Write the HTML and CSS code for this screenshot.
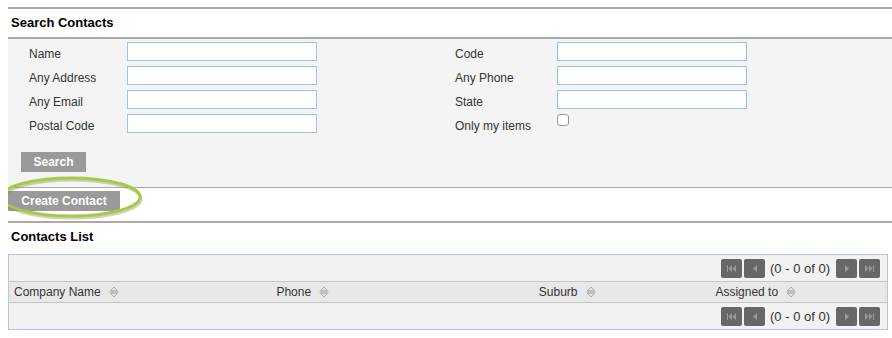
FILE: index.html
```html
<!DOCTYPE html>
<html lang="en">
<head>
    <meta charset="UTF-8">
    <title>Contacts</title>
    <link rel="stylesheet" href="styles.css">
</head>
<body>
    <div class="section-title">Search Contacts</div>
    <div class="search-panel">
        <div class="search-grid">
            <div class="search-col">
                <div class="field"><label>Name</label><input type="text"></div>
                <div class="field"><label>Any Address</label><input type="text"></div>
                <div class="field"><label>Any Email</label><input type="text"></div>
                <div class="field"><label>Postal Code</label><input type="text"></div>
            </div>
            <div class="search-col right">
                <div class="field"><label>Code</label><input type="text"></div>
                <div class="field"><label>Any Phone</label><input type="text"></div>
                <div class="field"><label>State</label><input type="text"></div>
                <div class="field"><label>Only my items</label><input type="checkbox" class="check"></div>
            </div>
        </div>
        <button class="btn">Search</button>
    </div>
    <div class="create-bar">
        <button class="btn create">Create Contact</button>
        <svg class="highlight" width="146" height="46" viewBox="0 0 146 46">
            <ellipse cx="72" cy="24" rx="69" ry="19" fill="none" stroke="#6f8a2c" stroke-opacity="0.35" stroke-width="3"/>
            <ellipse cx="71" cy="22" rx="69" ry="19" fill="none" stroke="#a6c94c" stroke-width="3"/>
        </svg>
    </div>

    <div class="section-title">Contacts List</div>
    <div class="list-box">
        <div class="pager">
            <span class="pg-btn">
                <svg width="9" height="7" viewBox="0 0 9 7"><rect x="0" y="0" width="1" height="7" fill="#999"/><path d="M5 0v7L1.5 3.5z M9 0v7L5.5 3.5z" fill="#999"/></svg>
            </span>
            <span class="pg-btn">
                <svg width="4" height="7" viewBox="0 0 4 7"><path d="M4 0v7L0 3.5z" fill="#999"/></svg>
            </span>
            <span class="pg-text">(0 - 0 of 0)</span>
            <span class="pg-btn">
                <svg width="4" height="7" viewBox="0 0 4 7"><path d="M0 0v7L4 3.5z" fill="#999"/></svg>
            </span>
            <span class="pg-btn">
                <svg width="9" height="7" viewBox="0 0 9 7"><path d="M0 0v7L3.5 3.5z M4 0v7L7.5 3.5z" fill="#999"/><rect x="8" y="0" width="1" height="7" fill="#999"/></svg>
            </span>
        </div>
        <div class="list-head">
            <div class="col wide">Company Name <svg class="sort" width="10" height="12" viewBox="0 0 10 12"><path d="M1.5 4.8L5 1L8.5 4.8z M1.5 7.2L5 11L8.5 7.2z" fill="none" stroke="#aaa" stroke-width="1"/><path d="M0.5 6h9" stroke="#aaa" stroke-width="1"/></svg></div>
            <div class="col wide">Phone <svg class="sort" width="10" height="12" viewBox="0 0 10 12"><path d="M1.5 4.8L5 1L8.5 4.8z M1.5 7.2L5 11L8.5 7.2z" fill="none" stroke="#aaa" stroke-width="1"/><path d="M0.5 6h9" stroke="#aaa" stroke-width="1"/></svg></div>
            <div class="col">Suburb <svg class="sort" width="10" height="12" viewBox="0 0 10 12"><path d="M1.5 4.8L5 1L8.5 4.8z M1.5 7.2L5 11L8.5 7.2z" fill="none" stroke="#aaa" stroke-width="1"/><path d="M0.5 6h9" stroke="#aaa" stroke-width="1"/></svg></div>
            <div class="col">Assigned to <svg class="sort" width="10" height="12" viewBox="0 0 10 12"><path d="M1.5 4.8L5 1L8.5 4.8z M1.5 7.2L5 11L8.5 7.2z" fill="none" stroke="#aaa" stroke-width="1"/><path d="M0.5 6h9" stroke="#aaa" stroke-width="1"/></svg></div>
        </div>
        <div class="pager">
            <span class="pg-btn">
                <svg width="9" height="7" viewBox="0 0 9 7"><rect x="0" y="0" width="1" height="7" fill="#999"/><path d="M5 0v7L1.5 3.5z M9 0v7L5.5 3.5z" fill="#999"/></svg>
            </span>
            <span class="pg-btn">
                <svg width="4" height="7" viewBox="0 0 4 7"><path d="M4 0v7L0 3.5z" fill="#999"/></svg>
            </span>
            <span class="pg-text">(0 - 0 of 0)</span>
            <span class="pg-btn">
                <svg width="4" height="7" viewBox="0 0 4 7"><path d="M0 0v7L4 3.5z" fill="#999"/></svg>
            </span>
            <span class="pg-btn">
                <svg width="9" height="7" viewBox="0 0 9 7"><path d="M0 0v7L3.5 3.5z M4 0v7L7.5 3.5z" fill="#999"/><rect x="8" y="0" width="1" height="7" fill="#999"/></svg>
            </span>
        </div>
    </div>
</body>
</html>
```

FILE: styles.css
```css
body {
    margin: 7px 0 0 8px;
    font-family: "Liberation Sans", Arial, sans-serif;
    font-size: 12px;
    color: #333;
    background: #fff;
}
.section-title {
    border-top: 2px solid #aaa;
    height: 28px;
    line-height: 28px;
    padding-left: 3px;
    font-size: 13px;
    font-weight: bold;
    color: #000;
}
.search-panel {
    background: #f4f4f4;
    border-top: 2px solid #aaa;
    border-bottom: 1px solid #aaa;
    padding: 3px 0 15px 13px;
}
.search-grid {
    display: flex;
}
.search-col {
    width: 426px;
}
.field {
    display: flex;
    height: 24px;
    padding-left: 8px;
}
.field label {
    width: 98px;
    padding-top: 4px;
    line-height: 16px;
}
.search-col.right .field label {
    width: 102px;
}
.field input[type="text"] {
    box-sizing: border-box;
    width: 190px;
    height: 19px;
    margin: 0;
    border: 1px solid #9cc2e6;
    background: #fff;
}
.check {
    -webkit-appearance: none;
    appearance: none;
    width: 12px;
    height: 12px;
    margin: 0;
    border: 1px solid #999;
    border-radius: 3px;
    background: #fff;
}
.btn {
    display: block;
    height: 20px;
    margin: 0;
    padding: 0 12px;
    border: none;
    border-radius: 0;
    background: #9a9a9a;
    color: #fff;
    font-family: "Liberation Sans", Arial, sans-serif;
    font-size: 12px;
    font-weight: bold;
    line-height: 20px;
}
.search-panel .btn {
    margin-top: 14px;
    width: 65px;
    padding: 0;
}
.create-bar {
    position: relative;
    padding: 3px 0 10px;
}
.btn.create {
    width: 112px;
    padding: 0;
}
.highlight {
    position: absolute;
    left: -8px;
    top: -13px;
}
.list-box {
    margin: 3px 4px 0 0;
    border: 1px solid #b3c6da;
    background: #f2f2f2;
}
.pager {
    display: flex;
    justify-content: flex-end;
    align-items: center;
    gap: 2px;
    height: 26px;
    padding-right: 7px;
}
.pg-btn {
    display: flex;
    align-items: center;
    justify-content: center;
    width: 21px;
    height: 19px;
    border-radius: 2px;
    background: #676767;
}
.pg-text {
    padding: 0 4px 0 3px;
    font-size: 13px;
    color: #333;
}
.list-head {
    display: flex;
    height: 20px;
    line-height: 20px;
    background: #e8e8e8;
    border-top: 1px solid #c6c6c6;
    border-bottom: 1px solid #c6c6c6;
}
.col {
    width: 20%;
    padding-left: 5px;
}
.col.wide {
    width: 30%;
}
.sort {
    margin-left: 5px;
    vertical-align: -2px;
}
```
